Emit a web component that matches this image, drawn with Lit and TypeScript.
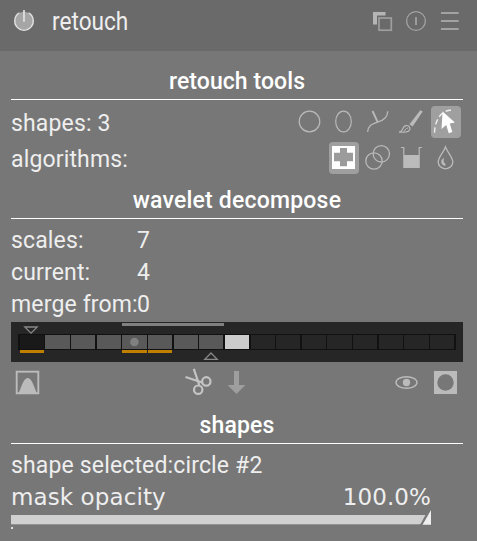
import { LitElement, html, css, svg } from "lit";
import { customElement } from "lit/decorators.js";

const SCALE_X = [20, 45, 71, 97, 122, 148, 174, 199, 225, 251, 276, 302, 327, 353, 379, 404, 430];
const SCALE_W = [24, 25, 24, 24, 25, 24, 24, 24, 24, 24, 24, 24, 25, 24, 24, 25, 24];
const USED = [0, 4, 5];

const cellFill = (i: number) =>
  i === 0 ? "#191919" : i < 8 ? "#595959" : i === 8 ? "#cccccc" : "#262626";

@customElement("wavelet-bar")
export class WaveletBar extends LitElement {
  static styles = css`
    :host { display: block; height: 40px; background: #262626; }
    svg { display: block; }
  `;
  render() {
    return html`<svg width="452" height="40" viewBox="11 322 452 40">
      <rect x="18" y="334" width="438" height="16" fill="#111" />
      ${SCALE_X.map((x, i) => svg`<rect x=${x} y="335" width=${SCALE_W[i]} height="14" fill=${cellFill(i)} />`)}
      ${USED.map((i) => svg`<rect x=${SCALE_X[i]} y="350" width=${SCALE_W[i]} height="3" fill="#bf8000" />`)}
      <rect x="122" y="323" width="102" height="3" fill="#808080" />
      <circle cx="134.4" cy="342" r="4.3" fill="#808080" />
      <path d="M24.8 327h12.4L31 333.2z" fill="none" stroke="#888" stroke-width="1.3" />
      <path d="M204.8 359.4h12.4L211 353z" fill="none" stroke="#888" stroke-width="1.3" />
    </svg>`;
  }
}

@customElement("app-root")
export class AppRoot extends LitElement {
  static styles = css`
    :host {
      display: block; width: 477px; height: 541px; overflow: hidden;
      background: #777; color: #eee;
      font: 23px/34px Roboto, "Liberation Sans", sans-serif;
      white-space: nowrap;
    }
    svg { display: block; }
    header {
      display: flex; align-items: center; box-sizing: border-box;
      height: 51px; padding: 0 17px 9px 12px; background: #6a6a6a;
    }
    .name { height: 42px; font-size: 25px; line-height: 44px; margin-left: 16px; flex: 1; }
    .name span { display: inline-block; transform: scaleX(0.905); transform-origin: left; }
    main { padding: 0 14px 0 11px; letter-spacing: 0.15px; }
    h2 {
      margin: 0; box-sizing: border-box; border-bottom: 1px solid #fff;
      font-size: 23px; font-weight: 500; text-align: center; color: #fff;
    }
    .first { height: 49px; line-height: 62px; letter-spacing: 0.08px; }
    .second { height: 41px; line-height: 46px; letter-spacing: 0.2px; }
    .third { height: 42px; line-height: 48px; }
    .row { display: flex; height: 36px; line-height: 36px; }
    .row > span { flex: 1; }
    .tools { display: flex; gap: 4px; padding: 0 2px 4px 0; }
    .tool { width: 30px; height: 32px; border-radius: 4px; }
    .on { background: #9f9f9f; }
    .stack { padding: 5px 0 2px; }
    .shapes { padding-top: 6px; }
    .pair { display: flex; height: 32px; }
    .pair span { width: 126px; }
    .actions { height: 40px; }
    .selected { margin-top: 5px; height: 32px; }
    .opacity {
      display: flex; justify-content: space-between; height: 29px; line-height: 32px;
      padding-right: 32px; font-family: "DejaVu Sans", sans-serif; letter-spacing: 0.1px;
    }
  `;
  render() {
    return html`
      <header>
        <svg width="24" height="42" viewBox="12 0 24 42">
          <circle cx="24" cy="21" r="9.3" fill="#a6a6a6" />
          <path d="M19.4 12.9a9.3 9.3 0 1 0 9.2 0" fill="none" stroke="#e2e2e2" stroke-width="1.3" />
          <path d="M24 10v11.7" stroke="#e2e2e2" stroke-width="1.7" />
        </svg>
        <div class="name"><span>retouch</span></div>
        <svg width="90" height="42" viewBox="370 0 90 42" fill="none" stroke="#a2a2a2">
          <path d="M373 12h12.5v3.5H377V24.5h-4z" fill="#b5b5b5" stroke="none" />
          <rect x="379" y="18" width="12.3" height="12.2" stroke-width="1.7" stroke="#9e9e9e" />
          <circle cx="416" cy="21" r="9.4" stroke-width="1.3" />
          <path d="M416 17v8" stroke-width="1.8" />
          <path d="M441 13h17.7M441 21h17.7M441 29h17.7" stroke-width="1.9" />
        </svg>
      </header>
      <main>
        <h2 class="first">retouch tools</h2>
        <div class="shapes">
          <div class="row">
            <span>shapes: 3</span>
            <div class="tools">
              <svg class="tool" viewBox="295 106 30 32"><circle cx="309.5" cy="121.5" r="10.3" fill="none" stroke="#b9b9b9" stroke-width="1.2" /></svg>
              <svg class="tool" viewBox="329 106 30 32"><ellipse cx="343.5" cy="121.5" rx="7.8" ry="10.3" fill="none" stroke="#b9b9b9" stroke-width="1.2" /></svg>
              <svg class="tool" viewBox="363 106 30 32" fill="none" stroke="#b9b9b9">
                <path d="M367.6 132C368 126 371 124.5 377.5 122.2C384.5 119.7 387.6 117 387.7 111.2" stroke-width="1.3" />
                <path d="M372.5 111L377.7 122.2" stroke-width="1.9" />
              </svg>
              <svg class="tool" viewBox="397 106 30 32">
                <path d="M420.3 110.2L422.7 111.5L412.6 126.6L409.5 124.2z" fill="#bbb" />
                <path d="M399 132.2C402 131.8 402.3 129.6 403.3 127.8C404.6 125.4 407 124.9 408.8 126.2C410.6 127.7 410.2 130 408.3 131.3C406.4 132.6 402.5 132.3 399 132.2z" fill="none" stroke="#bbb" stroke-width="1.2" />
                <path d="M403.3 131.6C405.6 131.3 404.5 128.5 408 128" fill="none" stroke="#bbb" stroke-width=".9" />
              </svg>
              <svg class="tool on" viewBox="431 106 30 32">
                <path d="M451 110.2C444 109.8 434.5 117 434.5 134" fill="none" stroke="#eee" stroke-width="1.4" stroke-dasharray="5.500 3" />
                <path d="M442.600 111.400L454.900 122.500L449.800 123.500L452.300 132L448.700 133.200L446.200 124.900L441.500 128.900z" fill="#fff" />
              </svg>
            </div>
          </div>
          <div class="row">
            <span>algorithms:</span>
            <div class="tools">
              <svg class="tool on" viewBox="329 142 30 32">
                <rect x="332" y="146" width="23" height="23" fill="#fff" />
                <path d="M340 148h7v4.700h6v8.600h-6v5h-7v-5h-6v-8.600h6z" fill="#9b9b9b" />
              </svg>
              <svg class="tool" viewBox="363 142 30 32" fill="none" stroke="#b9b9b9" stroke-width="1.3">
                <circle cx="374" cy="161" r="8.2" /><circle cx="381.3" cy="153.800" r="8.2" />
              </svg>
              <svg class="tool" viewBox="397 142 30 32">
                <path d="M404 155h15v12.5h-15z" fill="#bbb" />
                <path d="M401 147.5h2.8v19.8h15.4v-19.8h2.8" fill="none" stroke="#b9b9b9" stroke-width="1.2" />
              </svg>
              <svg class="tool" viewBox="431 142 30 32">
                <path d="M445.5 147C443.5 152.5 438.2 157.5 438.2 162A7.3 6.8 0 0 0 452.8 162C452.8 157.5 447.5 152.5 445.5 147z" fill="none" stroke="#bbb" stroke-width="1.3" />
                <path d="M443.800 158.200C440.500 159.500 440.500 165 445.200 165.500V163.700C443.200 163 443 160.500 443.800 158.200z" fill="#bbb" stroke="#bbb" stroke-width=".5" />
              </svg>
            </div>
          </div>
        </div>
        <h2 class="second">wavelet decompose</h2>
        <div class="stack">
          <div class="pair"><span>scales:</span>7</div>
          <div class="pair"><span>current:</span>4</div>
          <div class="pair"><span>merge from:</span>0</div>
        </div>
        <wavelet-bar></wavelet-bar>
        <svg class="actions" width="452" height="40" viewBox="11 362 452 40">
          <rect x="16.7" y="371.7" width="21.6" height="21.6" fill="none" stroke="#bbb" stroke-width="1.9" />
          <path d="M18.5 393C21.5 388 23 378 27.7 378S34 388 37 393z" fill="#bbb" />
          <g fill="none" stroke="#c4c4c4" stroke-width="2.2">
            <path d="M185.5 377L203 382.7M193.8 368.8L199.2 385" />
            <circle cx="206.3" cy="381.4" r="4.2" /><circle cx="198.2" cy="389.7" r="4.2" />
          </g>
          <path d="M234 371h5v14h6.4l-8.9 9l-8.9-9h6.4z" fill="#9e9e9e" />
          <ellipse cx="406.5" cy="382.5" rx="10.5" ry="5.8" fill="none" stroke="#bbb" stroke-width="1.4" />
          <circle cx="406.5" cy="382.5" r="3.7" fill="#bbb" />
          <rect x="434" y="371" width="23" height="23" fill="#bbb" />
          <circle cx="445.5" cy="382.5" r="8.2" fill="#777" />
        </svg>
        <h2 class="third">shapes</h2>
        <div class="selected">shape selected:circle #2</div>
        <div class="opacity"><span>mask opacity</span><span>100.0%</span></div>
        <svg width="452" height="20" viewBox="11 510 452 20">
          <path d="M11 515h414.5l-5 9H11z" fill="#d0d0d0" />
          <path d="M11 524h409l-.6 1H11z" fill="#929292" />
          <path d="M431 510v14.7h-8.5z" fill="#eee" />
          <rect x="11" y="527" width="2" height="2" fill="#ddd" />
        </svg>
      </main>
    `;
  }
}
